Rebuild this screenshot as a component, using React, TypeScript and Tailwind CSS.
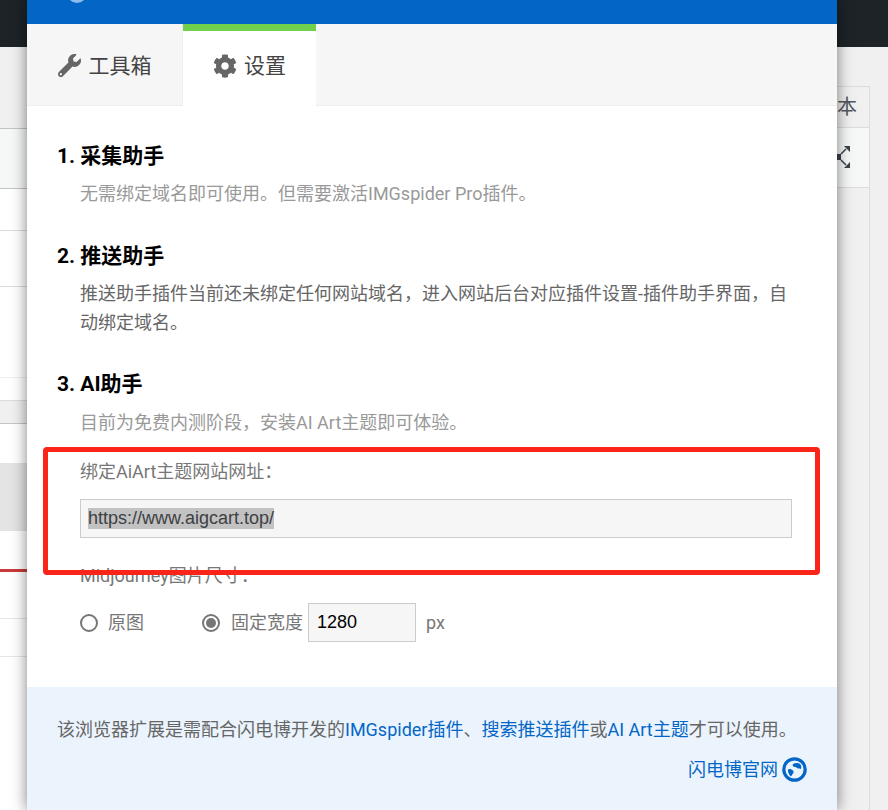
import { FaCog, FaWrench } from 'react-icons/fa'

const leftRows = [
  { h: 'h-[47px]', c: 'bg-[#1d2327]' },
  { h: 'h-[82px]', c: 'bg-[#f0f0f1] border-b border-[#c3c4c7]' },
  { h: 'h-[60px]', c: 'bg-[#f6f7f7] border-b border-[#c3c4c7]' },
  { h: 'h-[42px]', c: 'bg-white border-b border-[#dcdcde]' },
  { h: 'h-[56px]', c: 'bg-white border-b border-[#dcdcde]' },
  { h: 'h-[91px]', c: 'bg-white border-b border-[#f0f0f1]' },
  { h: 'h-[23px]', c: 'bg-white border-b border-[#dcdcde]' },
  { h: 'h-[23px]', c: 'bg-[#f0f0f1] border-b border-[#c3c4c7]' },
  { h: 'h-[39px]', c: 'bg-white' },
  { h: 'h-[68px]', c: 'bg-[#e4e4e4]' },
  { h: 'h-[38px]', c: 'bg-white' },
  { h: 'h-[3px]', c: 'bg-[#c93a3a]' },
  { h: 'h-[47px]', c: 'bg-white border-b border-[#e6e6e6]' },
  { h: 'h-[38px]', c: 'bg-white border-b border-[#e6e6e6]' },
  { h: 'h-[153px]', c: 'bg-white' },
]

function LeftStrip() {
  return (
    <div className="w-[27px] shrink-0">
      {leftRows.map((row, i) => (
        <div key={i} className={`${row.h} ${row.c}`} />
      ))}
    </div>
  )
}

function RightStrip() {
  return (
    <div className="flex-1 min-w-0">
      <div className="h-[47px] bg-[#1d2327]" />
      <div className="h-[39px]" />
      <div className="h-[724px] w-[33px] border-r border-[#dcdcde]">
        <div className="flex h-[42px] items-center border-t border-b border-[#dcdcde] bg-[#f0f0f1]">
          <span className="text-[20px] text-[#50575e]">本</span>
        </div>
        <div className="flex h-[60px] items-center border-b border-[#dcdcde] bg-[#f6f7f7]">
          <svg width="14" height="24" viewBox="0 0 14 24" className="mt-[-2px]">
            <rect x="0" y="9" width="4" height="6" fill="#3c434a" />
            <path d="M4 9 9 4M4 15l5 5" stroke="#3c434a" strokeWidth="1.5" fill="none" />
            <path d="M7 1h6v6zM7 23h6v-6z" fill="#3c434a" />
          </svg>
        </div>
      </div>
    </div>
  )
}

function GlobeIcon() {
  return (
    <svg width="25" height="25" viewBox="0 0 25 25">
      <circle cx="12.500" cy="12.500" r="10.700" fill="none" stroke="#0366c7" strokeWidth="3.200" />
      <path d="M11 7c2.500-1.500 6-1.500 7.500.5 1 1.500 1 3 .5 4.500-1-1-2-.5-3-.5-1.500-.5-1.500-1.500-3-1.500-1.500 0-3-1.500-2-3z" fill="#0366c7" />
      <path d="M6 12.500c1.500-1 3.500-.5 5 1 1 1.500.5 3-.5 3.500-.5 1-1 2-1.500 2.500-1.500-1-3.500-4.500-3-7z" fill="#0366c7" />
    </svg>
  )
}

export default function App() {
  return (
    <div className="relative flex h-[810px] w-[888px] overflow-hidden bg-[#f0f0f1] font-['Roboto','Noto_Sans_CJK_SC',sans-serif]">
      <LeftStrip />

      <div className="relative z-10 flex h-[810px] w-[810px] shrink-0 flex-col bg-white shadow-[0_0_14px_rgba(0,0,0,0.5)]">
        <div className="h-[24px] overflow-hidden bg-[#0366c7] pl-[40px]">
          <div className="mt-[-18px] h-[21px] w-[20px] rounded-full bg-[#8fbdea]" />
        </div>

        <div className="flex h-[82px] border-b border-[#eeeeee] bg-[#f6f6f6]">
          <div className="flex w-[156px] items-center justify-center gap-[8px] border-r border-[#eeeeee] pt-[2px] text-[21px] text-[#444444]">
            <FaWrench className="text-[23px] text-[#666666]" />
            <span className="mt-[2px]">工具箱</span>
          </div>
          <div className="mb-[-1px] flex w-[133px] items-center justify-center gap-[7px] border-t-[7px] border-[#72d14c] bg-white pb-[6px] text-[21px] text-[#444444]">
            <FaCog className="text-[24px] text-[#666666]" />
            <span className="mt-[2px]">设置</span>
          </div>
        </div>

        <div className="flex-1 px-[30px] pt-[35px]">
          <h2 className="text-[21px] font-bold leading-[30px] text-black">1. 采集助手</h2>
          <p className="mt-[8px] pl-[23px] text-[18px] leading-[29px] text-[#999999]">
            无需绑定域名即可使用。但需要激活IMGspider Pro插件。
          </p>

          <h2 className="mt-[33px] text-[21px] font-bold leading-[30px] text-black">2. 推送助手</h2>
          <p className="mt-[8px] pl-[23px] pr-[14px] text-[18px] leading-[29px] text-[#666666]">
            推送助手插件当前还未绑定任何网站域名，进入网站后台对应插件设置-插件助手界面，自动绑定域名。
          </p>

          <h2 className="mt-[32px] text-[21px] font-bold leading-[30px] text-black">3. AI助手</h2>
          <p className="mt-[9px] pl-[23px] text-[18px] leading-[29px] text-[#999999]">
            目前为免费内测阶段，安装AI Art主题即可体验。
          </p>

          <div className="pl-[23px]">
            <p className="mt-[20px] text-[18px] leading-[29px] text-[#777777]">绑定AiArt主题网站网址：</p>
            <div className="mt-[13px] flex h-[39px] w-[712px] items-center border border-[#cccccc] bg-[#f6f6f6] pl-[7px] font-['Liberation_Sans',sans-serif] text-[18px] text-[#3c4043]">
              <span className="bg-[#c2c2c2] leading-[21px]">https://www.aigcart.top/</span>
            </div>
            <p className="mt-[23px] text-[18px] leading-[29px] text-[#777777]">Midjourney图片尺寸：</p>

            <div className="mt-[13px] flex h-[39px] items-center text-[18px] text-[#777777]">
              <span className="h-[18px] w-[18px] rounded-full border-2 border-[#767676] bg-white" />
              <span className="ml-[10px]">原图</span>
              <span className="ml-[58px] flex h-[18px] w-[18px] items-center justify-center rounded-full border-2 border-[#767676] bg-white">
                <span className="h-[10px] w-[10px] rounded-full bg-[#767676]" />
              </span>
              <span className="ml-[11px]">固定宽度</span>
              <div className="ml-[5px] flex h-[39px] w-[108px] items-center border border-[#cccccc] bg-[#f6f6f6] pl-[8px] font-['Liberation_Sans',sans-serif] text-black">
                1280
              </div>
              <span className="ml-[10px]">px</span>
            </div>
          </div>
        </div>

        <div className="h-[123px] bg-[#ebf4fd] px-[30px] pt-[28px] text-[18px] leading-[29px] text-[#666666]">
          <p>
            该浏览器扩展是需配合闪电博开发的<span className="text-[#0366c7]">IMGspider插件</span>、
            <span className="text-[#0366c7]">搜索推送插件</span>或<span className="text-[#0366c7]">AI Art主题</span>才可以使用。
          </p>
          <div className="mt-[11px] flex items-center justify-end gap-[4px] text-[#0366c7]">
            <span>闪电博官网</span>
            <GlobeIcon />
          </div>
        </div>
      </div>

      <RightStrip />

      {/* red annotation box */}
      <div className="absolute left-[43px] top-[447px] z-20 h-[128px] w-[777px] rounded-[4px] border-[5px] border-[#fb2418]" />
    </div>
  )
}
